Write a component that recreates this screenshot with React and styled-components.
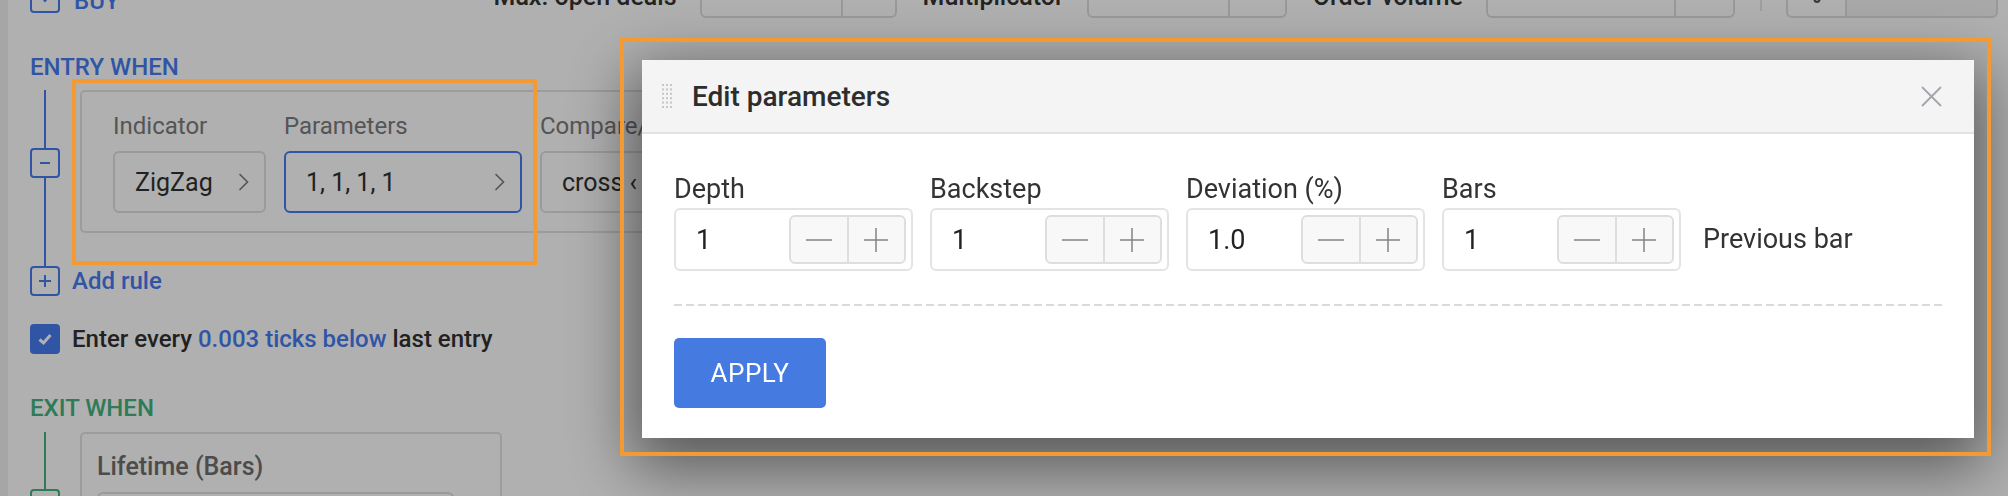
import React from "react";
import styled, { createGlobalStyle } from "styled-components";
import { Settings } from "lucide-react";

const BLUE = "#467cf0";
const GREEN = "#43b280";

const GlobalStyle = createGlobalStyle`
  html, body {
    margin: 0;
    padding: 0;
  }
  body {
    width: 2008px;
    height: 496px;
    overflow: hidden;
    background: #f1f1f1;
    font-family: Roboto, "Liberation Sans", Arial, sans-serif;
  }
  * {
    box-sizing: border-box;
  }
`;

// page behind the dialog
const Page = styled.div`
  margin-left: 8px;
  min-height: 100vh;
  background: #fff;
  padding: 0 10px 0 22px;
`;

const TopBar = styled.div`
  display: flex;
  align-items: center;
  height: 56px;
  margin-top: -37px;
`;

const BuyGroup = styled.div`
  display: flex;
  align-items: center;
  gap: 14px;
  margin-top: 14px;
  color: ${BLUE};
  font-size: 24px;
  font-weight: 500;
`;

const BuyText = styled.span`
  margin-top: 6px;
`;

const SquareButton = styled.span`
  width: 30px;
  height: 30px;
  flex-shrink: 0;
  border: 2px solid ${(p) => p.$color};
  border-radius: 4px;
  display: flex;
  align-items: center;
  justify-content: center;
  color: ${(p) => p.$color};
  background: #fff;
`;

const Controls = styled.div`
  margin-left: auto;
  display: flex;
  align-items: center;
  height: 100%;
`;

const TopLabel = styled.span`
  font-size: 25px;
  font-weight: 500;
  color: #333;
  margin: 10px 23px 0 26px;
  white-space: nowrap;
`;

const SplitInput = styled.div`
  display: flex;
  height: 54px;
  border: 2px solid #dedede;
  border-radius: 6px;
  background: #fff;
`;

const SplitPart = styled.div`
  width: ${(p) => p.$w}px;
  & + & {
    border-left: 2px solid #dedede;
  }
`;

const VSeparator = styled.div`
  width: 2px;
  height: 40px;
  background: #e6e6e6;
  margin: 0 24px 0 25px;
`;

const IconButton = styled.div`
  width: 61px;
  height: 54px;
  border: 2px solid #dedede;
  border-radius: 6px 0 0 6px;
  display: flex;
  align-items: center;
  justify-content: center;
  color: #555;
`;

const RunButton = styled.div`
  width: 151px;
  height: 54px;
  border: 2px solid #dedede;
  border-left: none;
  border-radius: 0 6px 6px 0;
  background: #f4f4f4;
  color: #fff;
  font-size: 24px;
  font-weight: 500;
  display: flex;
  align-items: center;
  justify-content: center;
  letter-spacing: 1px;
`;

const SectionTitle = styled.div`
  margin: ${(p) => p.$top}px 0 ${(p) => p.$bottom}px;
  font-size: 24px;
  line-height: 28px;
  font-weight: 500;
  color: ${(p) => p.$color};
`;

const RuleRow = styled.div`
  display: flex;
  gap: 20px;
`;

const Rail = styled.div`
  width: 30px;
  flex-shrink: 0;
  display: flex;
  flex-direction: column;
  align-items: center;
`;

const RailLine = styled.div`
  width: 2px;
  background: ${(p) => p.$color};
  height: ${(p) => (p.$h ? `${p.$h}px` : "auto")};
  flex: ${(p) => (p.$grow ? 1 : "none")};
`;

const CardWrap = styled.div`
  padding-bottom: ${(p) => p.$pad || 0}px;
`;

const Card = styled.div`
  width: ${(p) => p.$w}px;
  border: 2px solid #e2e2e2;
  border-radius: 5px;
  background: #fff;
  padding: ${(p) => p.$pad};
  display: flex;
  gap: 18px;
`;

const Field = styled.div`
  display: flex;
  flex-direction: column;
`;

const FieldLabel = styled.div`
  font-size: ${(p) => (p.$strong ? 25 : 24)}px;
  font-weight: ${(p) => (p.$strong ? 500 : 400)};
  line-height: 28px;
  color: ${(p) => (p.$strong ? "#6e6e6e" : "#7b7b7b")};
  margin-bottom: 11px;
  white-space: nowrap;
`;

const SelectBox = styled.div`
  width: ${(p) => p.$w}px;
  height: 62px;
  border: 2px solid ${(p) => (p.$active ? BLUE : "#e0e0e0")};
  border-radius: 6px;
  background: #fff;
  padding: 0 15px 0 20px;
  display: flex;
  align-items: center;
  justify-content: space-between;
  font-size: 25px;
  color: #313131;
  white-space: nowrap;
  overflow: hidden;
`;

const InlineRow = styled.div`
  display: flex;
  align-items: center;
  gap: 12px;
  margin-top: ${(p) => p.$top || 0}px;
  font-size: 24px;
  font-weight: 500;
  color: ${(p) => p.$color || "#313131"};
`;

const CheckBox = styled.span`
  width: 30px;
  height: 30px;
  border-radius: 4px;
  background: ${BLUE};
  display: flex;
  align-items: center;
  justify-content: center;
`;

const Accent = styled.span`
  color: ${BLUE};
`;

// dialog
const Backdrop = styled.div`
  position: fixed;
  inset: 0;
  z-index: 10;
  background: rgba(0, 0, 0, 0.31);
  padding: 60px 0 0 642px;
`;

const Modal = styled.div`
  width: 1332px;
  background: #fff;
  box-shadow: 0 20px 60px 10px rgba(0, 0, 0, 0.5);
`;

const ModalHeader = styled.div`
  height: 74px;
  background: #f4f4f4;
  border-bottom: 2px solid #e2e2e2;
  display: flex;
  align-items: center;
  padding: 0 32px 0 20px;
`;

const ModalTitle = styled.div`
  margin-left: 19px;
  font-size: 28px;
  font-weight: 500;
  color: #2d2d2d;
`;

const CloseButton = styled.div`
  margin-left: auto;
  display: flex;
`;

const ModalBody = styled.div`
  padding: 40px 32px 30px;
`;

const FieldsRow = styled.div`
  display: flex;
  align-items: flex-end;
  gap: 17px;
`;

const NumLabel = styled.div`
  font-size: 27px;
  line-height: 30px;
  color: #333;
  margin-bottom: 4px;
`;

const NumBox = styled.div`
  width: 239px;
  height: 63px;
  border: 2px solid #e4e4e4;
  border-radius: 6px;
  padding: 5px 5px 5px 20px;
  display: flex;
  align-items: center;
`;

const NumValue = styled.div`
  flex: 1;
  font-size: 27px;
  color: #222;
`;

const Stepper = styled.div`
  width: 117px;
  height: 100%;
  display: flex;
  border: 2px solid #dedede;
  border-radius: 6px;
  background: #f8f8f8;
`;

const StepButton = styled.div`
  flex: 1;
  display: flex;
  align-items: center;
  justify-content: center;
  & + & {
    border-left: 2px solid #dedede;
  }
`;

const SideText = styled.div`
  height: 63px;
  line-height: 63px;
  margin-left: 5px;
  font-size: 27px;
  color: #333;
`;

const Dashed = styled.div`
  height: 2px;
  margin: 33px 0 32px;
  background: repeating-linear-gradient(90deg, #dadada 0 8px, transparent 8px 12px);
`;

const ApplyButton = styled.button`
  width: 152px;
  height: 70px;
  border: none;
  border-radius: 5px;
  background: #457be1;
  color: #fff;
  font-family: inherit;
  font-size: 26px;
  letter-spacing: 0.5px;
`;

// orange annotation frames on top of the screenshot
const Highlight = styled.div`
  position: absolute;
  left: ${(p) => p.$x}px;
  top: ${(p) => p.$y}px;
  width: ${(p) => p.$w}px;
  height: ${(p) => p.$h}px;
  border: 4px solid #f39a33;
  z-index: 20;
  pointer-events: none;
`;

const Chevron = () => (
  <svg width="11" height="20" viewBox="0 0 11 20">
    <polyline points="1.5,2 9.5,10 1.5,18" fill="none" stroke="#7a7a7a" strokeWidth="1.6" />
  </svg>
);

const Minus = ({ color }) => (
  <svg width="14" height="14" viewBox="0 0 14 14">
    <line x1="2" y1="7" x2="12" y2="7" stroke={color} strokeWidth="2" />
  </svg>
);

const Plus = ({ color }) => (
  <svg width="16" height="16" viewBox="0 0 16 16">
    <line x1="2" y1="8" x2="14" y2="8" stroke={color} strokeWidth="2" />
    <line x1="8" y1="2" x2="8" y2="14" stroke={color} strokeWidth="2" />
  </svg>
);

const StepMinus = () => (
  <svg width="26" height="26" viewBox="0 0 26 26">
    <line x1="0" y1="13" x2="26" y2="13" stroke="#8a8a8a" strokeWidth="1.6" />
  </svg>
);

const StepPlus = () => (
  <svg width="24" height="24" viewBox="0 0 24 24">
    <line x1="0" y1="12" x2="24" y2="12" stroke="#8a8a8a" strokeWidth="1.6" />
    <line x1="12" y1="0" x2="12" y2="24" stroke="#8a8a8a" strokeWidth="1.6" />
  </svg>
);

const DragDots = () => (
  <svg width="11" height="26" viewBox="0 0 11 26">
    {[0, 1, 2, 3, 4, 5].map((r) =>
      [0, 1, 2].map((c) => (
        <rect key={`${r}-${c}`} x={c * 4} y={r * 4.4 + 1} width="2" height="2" fill="#c6c6c6" />
      ))
    )}
  </svg>
);

const params = [
  { label: "Depth", value: "1" },
  { label: "Backstep", value: "1" },
  { label: "Deviation (%)", value: "1.0" },
  { label: "Bars", value: "1" },
];

const App = () => {
  return (
    <>
      <GlobalStyle />
      <Page>
        <TopBar>
          <BuyGroup>
            <SquareButton $color={BLUE}>
              <svg width="14" height="14" viewBox="0 0 14 14">
                <polyline points="2,4 7,10 12,4" fill="none" stroke={BLUE} strokeWidth="2" />
              </svg>
            </SquareButton>
            <BuyText>BUY</BuyText>
          </BuyGroup>
          <Controls>
            <TopLabel>Max. open deals</TopLabel>
            <SplitInput>
              <SplitPart $w={139} />
              <SplitPart $w={54} />
            </SplitInput>
            <TopLabel>Multiplicator</TopLabel>
            <SplitInput>
              <SplitPart $w={139} />
              <SplitPart $w={57} />
            </SplitInput>
            <TopLabel>Order volume</TopLabel>
            <SplitInput>
              <SplitPart $w={186} />
              <SplitPart $w={59} />
            </SplitInput>
            <VSeparator />
            <IconButton>
              <Settings size={26} strokeWidth={2} />
            </IconButton>
            <RunButton>START</RunButton>
          </Controls>
        </TopBar>

        <SectionTitle $color={BLUE} $top={34} $bottom={9}>
          ENTRY WHEN
        </SectionTitle>
        <RuleRow>
          <Rail>
            <RailLine $color={BLUE} $h={58} />
            <SquareButton $color={BLUE}>
              <Minus color={BLUE} />
            </SquareButton>
            <RailLine $color={BLUE} $grow />
          </Rail>
          <CardWrap $pad={33}>
            <Card $w={900} $pad="20px 31px 18px">
              <Field>
                <FieldLabel>Indicator</FieldLabel>
                <SelectBox $w={153}>
                  ZigZag
                  <Chevron />
                </SelectBox>
              </Field>
              <Field>
                <FieldLabel>Parameters</FieldLabel>
                <SelectBox $w={238} $active>
                  1, 1, 1, 1
                  <Chevron />
                </SelectBox>
              </Field>
              <Field>
                <FieldLabel>Compare/Value</FieldLabel>
                <SelectBox $w={220}>
                  cross ‹
                  <Chevron />
                </SelectBox>
              </Field>
            </Card>
          </CardWrap>
        </RuleRow>
        <InlineRow $color={BLUE}>
          <SquareButton $color={BLUE}>
            <Plus color={BLUE} />
          </SquareButton>
          Add rule
        </InlineRow>
        <InlineRow $top={28}>
          <CheckBox>
            <svg width="18" height="18" viewBox="0 0 18 18">
              <polyline points="3.5,9.5 7.5,13 14.5,5" fill="none" stroke="#fff" strokeWidth="3" />
            </svg>
          </CheckBox>
          <span>
            Enter every <Accent>0.003 ticks below</Accent> last entry
          </span>
        </InlineRow>

        <SectionTitle $color={GREEN} $top={40} $bottom={10}>
          EXIT WHEN
        </SectionTitle>
        <RuleRow>
          <Rail>
            <RailLine $color={GREEN} $h={57} />
            <SquareButton $color={GREEN}>
              <Minus color={GREEN} />
            </SquareButton>
            <RailLine $color={GREEN} $grow />
          </Rail>
          <Card $w={422} $pad="19px 15px 18px">
            <Field>
              <FieldLabel $strong>Lifetime (Bars)</FieldLabel>
              <SelectBox $w={357}>10</SelectBox>
            </Field>
          </Card>
        </RuleRow>
      </Page>

      <Backdrop>
        <Modal>
          <ModalHeader>
            <DragDots />
            <ModalTitle>Edit parameters</ModalTitle>
            <CloseButton>
              <svg width="21" height="21" viewBox="0 0 21 21">
                <line x1="1" y1="1" x2="20" y2="20" stroke="#a3a7ab" strokeWidth="2" />
                <line x1="20" y1="1" x2="1" y2="20" stroke="#a3a7ab" strokeWidth="2" />
              </svg>
            </CloseButton>
          </ModalHeader>
          <ModalBody>
            <FieldsRow>
              {params.map((p) => (
                <Field key={p.label}>
                  <NumLabel>{p.label}</NumLabel>
                  <NumBox>
                    <NumValue>{p.value}</NumValue>
                    <Stepper>
                      <StepButton>
                        <StepMinus />
                      </StepButton>
                      <StepButton>
                        <StepPlus />
                      </StepButton>
                    </Stepper>
                  </NumBox>
                </Field>
              ))}
              <SideText>Previous bar</SideText>
            </FieldsRow>
            <Dashed />
            <ApplyButton>APPLY</ApplyButton>
          </ModalBody>
        </Modal>
      </Backdrop>

      <Highlight $x={72} $y={79} $w={465} $h={186} />
      <Highlight $x={620} $y={38} $w={1371} $h={418} />
    </>
  );
};

export default App;
